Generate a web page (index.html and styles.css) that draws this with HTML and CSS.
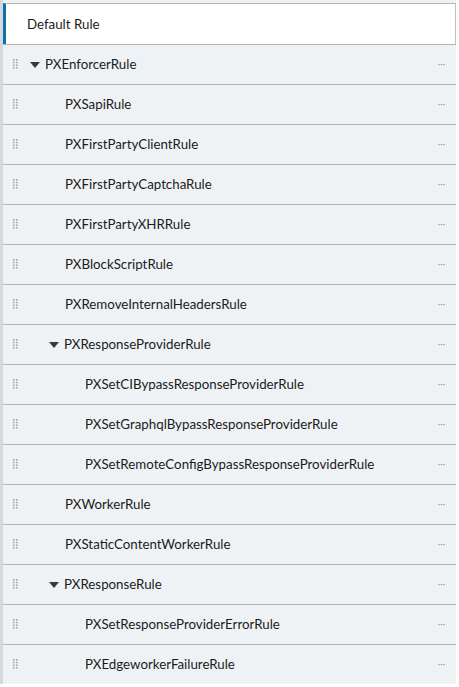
FILE: index.html
```html
<!DOCTYPE html>
<html>
<head>
<meta charset="utf-8">
<link rel="stylesheet" href="styles.css">
</head>
<body>
<div class="tree">
  <div class="row default"><span class="label">Default Rule</span></div>
  <div class="row l1"><span class="handle"></span><span class="caret"></span><span class="label">PXEnforcerRule</span><span class="more">···</span></div>
  <div class="row l2"><span class="handle"></span><span class="label">PXSapiRule</span><span class="more">···</span></div>
  <div class="row l2"><span class="handle"></span><span class="label">PXFirstPartyClientRule</span><span class="more">···</span></div>
  <div class="row l2"><span class="handle"></span><span class="label">PXFirstPartyCaptchaRule</span><span class="more">···</span></div>
  <div class="row l2"><span class="handle"></span><span class="label">PXFirstPartyXHRRule</span><span class="more">···</span></div>
  <div class="row l2"><span class="handle"></span><span class="label">PXBlockScriptRule</span><span class="more">···</span></div>
  <div class="row l2"><span class="handle"></span><span class="label">PXRemoveInternalHeadersRule</span><span class="more">···</span></div>
  <div class="row l2c"><span class="handle"></span><span class="caret"></span><span class="label">PXResponseProviderRule</span><span class="more">···</span></div>
  <div class="row l3"><span class="handle"></span><span class="label">PXSetCIBypassResponseProviderRule</span><span class="more">···</span></div>
  <div class="row l3"><span class="handle"></span><span class="label">PXSetGraphqlBypassResponseProviderRule</span><span class="more">···</span></div>
  <div class="row l3"><span class="handle"></span><span class="label">PXSetRemoteConfigBypassResponseProviderRule</span><span class="more">···</span></div>
  <div class="row l2"><span class="handle"></span><span class="label">PXWorkerRule</span><span class="more">···</span></div>
  <div class="row l2"><span class="handle"></span><span class="label">PXStaticContentWorkerRule</span><span class="more">···</span></div>
  <div class="row l2c"><span class="handle"></span><span class="caret"></span><span class="label">PXResponseRule</span><span class="more">···</span></div>
  <div class="row l3"><span class="handle"></span><span class="label">PXSetResponseProviderErrorRule</span><span class="more">···</span></div>
  <div class="row l3"><span class="handle"></span><span class="label">PXEdgeworkerFailureRule</span><span class="more">···</span></div>
</div>
</body>
</html>
```
FILE: styles.css
```css
html, body {
  margin: 0;
  padding: 0;
  background: #ffffff;
}
body {
  font-family: Lato, "Open Sans", sans-serif;
  font-size: 13.3px;
  color: #1b1b1b;
}
.tree {
  width: 453px;
  padding-top: 3px;
  background: #eff2f5;
  border-left: 3px solid #d5d9dd;
}
.row {
  display: flex;
  align-items: center;
  height: 39px;
  border-top: 1px solid #b5b5b5;
  padding-right: 11px;
}
.row.default {
  height: 40px;
  background: #ffffff;
  border-left: 3px solid #0c70ab;
  border-right: 1px solid #c0c0c0;
  padding-left: 21px;
}
.handle {
  width: 6px;
  height: 10px;
  margin-left: 10px;
  margin-top: -1px;
  flex: none;
  background-image: url("data:image/svg+xml;utf8,<svg xmlns='http://www.w3.org/2000/svg' width='5' height='10'><g fill='%23a5a5a5'><rect x='0' y='0' width='1.6' height='1.6'/><rect x='3' y='0' width='1.6' height='1.6'/><rect x='0' y='2.7' width='1.6' height='1.6'/><rect x='3' y='2.7' width='1.6' height='1.6'/><rect x='0' y='5.4' width='1.6' height='1.6'/><rect x='3' y='5.4' width='1.6' height='1.6'/><rect x='0' y='8.1' width='1.6' height='1.6'/><rect x='3' y='8.1' width='1.6' height='1.6'/></g></svg>");
  background-repeat: no-repeat;
}
.caret {
  width: 0;
  height: 0;
  border-left: 5px solid transparent;
  border-right: 5px solid transparent;
  border-top: 6px solid #3a3a3a;
  flex: none;
}
.l1 .caret { margin-left: 11px; margin-right: 5px; }
.l2 .label { margin-left: 46px; }
.l2c .caret { margin-left: 30px; margin-right: 5px; }
.l3 .label { margin-left: 66px; }
.label {
  flex: 1;
  white-space: nowrap;
  margin-top: -1px;
}
.more {
  flex: none;
  font-family: "DejaVu Sans", sans-serif;
  font-size: 9px;
  line-height: 1;
  letter-spacing: -0.4px;
  color: #6f6f6f;
  margin-top: 1px;
}
```
